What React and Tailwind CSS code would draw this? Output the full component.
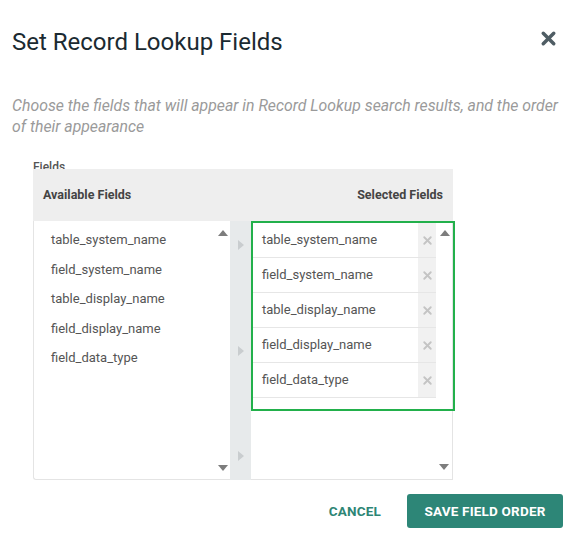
import { X } from "lucide-react";

const fields = [
  "table_system_name",
  "field_system_name",
  "table_display_name",
  "field_display_name",
  "field_data_type",
];

const Tri = ({ dir, className }) => {
  const pts = {
    up: "0,6 5,0 10,6",
    down: "0,0 10,0 5,6",
    right: "0,0 6,5 0,10",
  }[dir];
  const vb = dir === "right" ? "0 0 6 10" : "0 0 10 6";
  return (
    <svg viewBox={vb} className={className}>
      <polygon points={pts} fill="currentColor" />
    </svg>
  );
};

export default function App() {
  return (
    <div
      className="w-[580px] h-[549px] bg-white relative overflow-hidden"
      style={{ fontFamily: "Roboto, 'Liberation Sans', sans-serif" }}
    >
      <div className="flex items-start justify-between pl-3 pr-[21px] pt-[27px]">
        <h1 className="text-[24px] leading-[30px] text-[#1b2a31] font-normal">
          Set Record Lookup Fields
        </h1>
        <button className="mt-[1px] text-[#4f5d64]">
          <X size={21} strokeWidth={4} />
        </button>
      </div>

      <p className="px-3 mt-[38px] text-[15.8px] leading-[21px] italic text-[#9a9a9a] w-[580px]">
        Choose the fields that will appear in Record Lookup search results, and the order of their appearance
      </p>

      <div className="ml-[33px] mt-[23px] w-[420px]">
        <div className="h-[9px] overflow-hidden text-[12px] leading-[14px] text-[#555] font-medium">
          Fields
        </div>
        <div className="h-[52px] bg-[#eeeeee] flex items-center justify-between px-[10px] text-[12.5px] font-bold text-[#444]">
          <span>Available Fields</span>
          <span>Selected Fields</span>
        </div>
        <div className="flex h-[259px]">
          <div className="relative w-[197px] border-l border-b border-[#e4e4e4] rounded-bl-[3px] pt-[4px] pl-[17px]">
            {fields.map((f) => (
              <div key={f} className="text-[13px] leading-[29.5px] text-[#555]">
                {f}
              </div>
            ))}
            <Tri dir="up" className="absolute right-[2px] top-[9px] w-[10px] h-[6px] text-[#7d7d7d]" />
            <Tri dir="down" className="absolute right-[2px] bottom-[8px] w-[10px] h-[6px] text-[#7d7d7d]" />
          </div>
          <div className="w-[21px] bg-[#e7eaeb] flex flex-col items-center justify-between py-[19px] text-[#c9cdcf]">
            <Tri dir="right" className="w-[6px] h-[10px]" />
            <Tri dir="right" className="w-[6px] h-[10px]" />
            <Tri dir="right" className="w-[6px] h-[10px]" />
          </div>
          <div className="relative w-[202px] border-r border-b border-[#e4e4e4]">
            <div className="w-[204px] h-[190px] border-2 border-[#22b04b] pr-[17px]">
              {fields.map((f) => (
                <div key={f} className="flex h-[35px] border-b border-[#e6e6e6]">
                  <span className="flex-1 pl-[9px] text-[13px] leading-[34px] text-[#555]">
                    {f}
                  </span>
                  <span className="w-[18px] bg-[#f1f1f1] flex items-center justify-center text-[#c4c4c4]">
                    <X size={13} strokeWidth={3.5} />
                  </span>
                </div>
              ))}
            </div>
            <Tri dir="up" className="absolute right-[2px] top-[9px] w-[10px] h-[6px] text-[#7d7d7d]" />
            <Tri dir="down" className="absolute right-[3px] bottom-[9px] w-[10px] h-[6px] text-[#7d7d7d]" />
          </div>
        </div>
      </div>

      <div className="flex justify-end items-center gap-[10px] pr-[17px] mt-[14px]">
        <button className="h-[34px] px-4 text-[13.5px] font-bold text-[#2d8575] tracking-[0.2px]">
          CANCEL
        </button>
        <button className="h-[34px] w-[156px] bg-[#2d8677] rounded-[3px] text-[13.5px] font-bold text-white tracking-[0.2px]">
          SAVE FIELD ORDER
        </button>
      </div>
    </div>
  );
}
